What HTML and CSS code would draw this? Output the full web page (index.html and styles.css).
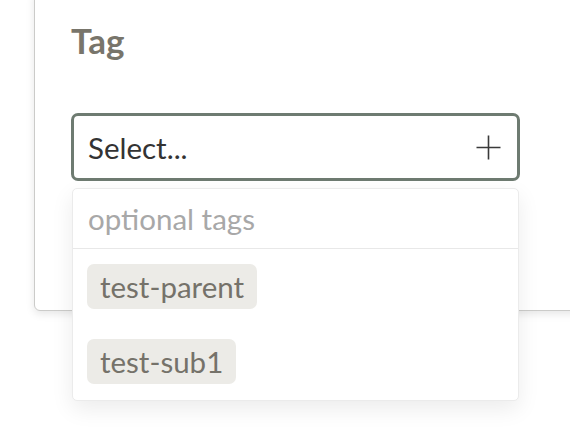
FILE: index.html
```html
<!DOCTYPE html>
<html lang="en">
<head>
<meta charset="utf-8">
<title>Tag</title>
<link rel="stylesheet" href="styles.css">
</head>
<body>
  <div class="card">
    <h2 class="card-title">Tag</h2>
    <div class="field">
      <div class="select">
        <span class="select-value">Select...</span>
        <svg class="plus" width="25" height="25" viewBox="0 0 25 25" aria-hidden="true">
          <path d="M12.5 0.5V24.5M0.5 12.5H24.5" stroke="#3a3a3a" stroke-width="1.6" fill="none"/>
        </svg>
      </div>
      <div class="menu">
        <div class="menu-search">optional tags</div>
        <ul class="menu-list">
          <li class="menu-option"><span class="chip">test-parent</span></li>
          <li class="menu-option"><span class="chip">test-sub1</span></li>
        </ul>
      </div>
    </div>
  </div>
</body>
</html>
```

FILE: styles.css
```css
html, body {
  margin: 0;
  padding: 0;
  background: #ffffff;
}

body {
  width: 570px;
  height: 448px;
  overflow: hidden;
  font-family: "Lato", "Noto Sans", sans-serif;
}

.card {
  box-sizing: border-box;
  width: 640px;
  margin-top: -10px;
  margin-left: 34px;
  padding: 29px 36px 129px;
  border: 1px solid #cbcbc9;
  border-radius: 6px;
  background: #ffffff;
  box-shadow: 0 3px 8px rgba(0, 0, 0, 0.10);
}

.card-title {
  margin: 0 0 53px;
  font-size: 35px;
  line-height: 40px;
  font-weight: 700;
  color: #78756b;
}

.field {
  position: relative;
  width: 449px;
}

.select {
  box-sizing: border-box;
  height: 68px;
  display: flex;
  align-items: center;
  justify-content: space-between;
  padding: 0 16px 0 14px;
  border: 3px solid #6e7b71;
  border-radius: 7px;
  background: #ffffff;
}

.select-value {
  font-size: 29.5px;
  color: #333333;
}

.plus {
  display: block;
}

.menu {
  position: absolute;
  left: 1px;
  top: 75px;
  box-sizing: border-box;
  width: 447px;
  border: 1px solid #ebebeb;
  border-radius: 5px;
  background: #ffffff;
  box-shadow: 0 8px 22px rgba(0, 0, 0, 0.08);
}

.menu-search {
  height: 59px;
  display: flex;
  align-items: center;
  padding-left: 15px;
  border-bottom: 1px solid #e8e8e8;
  font-size: 29.5px;
  color: #a8a8a8;
}

.menu-list {
  list-style: none;
  margin: 0;
  padding: 0 0 1px;
}

.menu-option {
  height: 75px;
  display: flex;
  align-items: center;
  padding-left: 14px;
}

.chip {
  display: inline-block;
  height: 45px;
  line-height: 45px;
  padding: 0 13px;
  border-radius: 7px;
  background: #ecebe7;
  font-size: 29.5px;
  color: #75726a;
}
```
